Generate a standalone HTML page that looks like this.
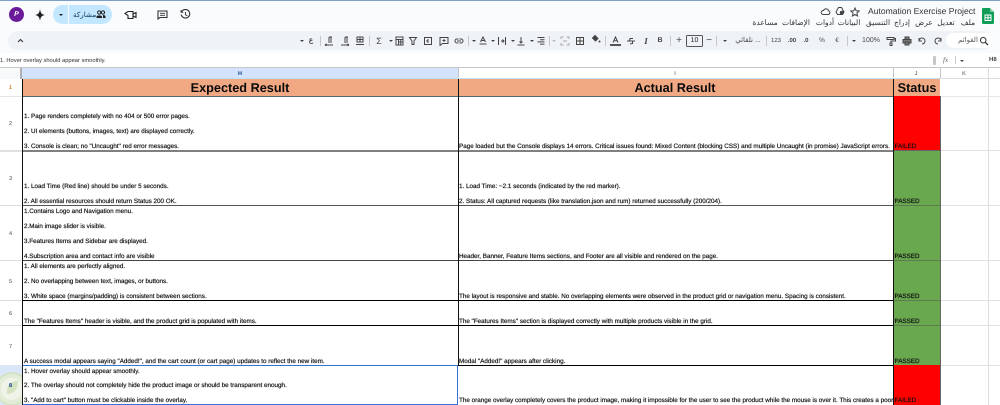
<!DOCTYPE html>
<html><head><meta charset="utf-8">
<style>
html,body{margin:0;padding:0;width:1000px;height:405px;overflow:hidden;background:#fff}
body{position:relative;font-family:"Liberation Sans","Noto Sans CJK SC",sans-serif;color:#111;text-rendering:geometricPrecision}
div,span,svg{position:absolute}
.b{position:absolute}
.t{font-size:6.3px;line-height:8px;height:8px;white-space:nowrap;color:#111;-webkit-text-stroke:.18px #111;margin-top:.5px}
.h{left:24px}.i{left:459px;max-width:434px;overflow:hidden}.j{left:894.5px}
.hd{font-weight:bold;font-size:12.7px;line-height:16px;top:80px;color:#0a0a0a;white-space:nowrap;transform:translateX(-50%)}
.rn{font-size:5.5px;line-height:6px;color:#444;left:0;width:21px;text-align:center;margin-top:.5px}
.ch{font-size:5.5px;line-height:6px;color:#444;top:71px;transform:translateX(-50%)}
.m{font-size:7.5px;line-height:10px;top:18px;color:#333;white-space:nowrap;transform:translateX(-50%)}
.tb{font-size:7px;line-height:10px;top:36px;color:#444;white-space:nowrap;transform:translateX(-50%)}
.dd{width:0;height:0;border-left:2px solid transparent;border-right:2px solid transparent;border-top:2px solid #444;top:40px}
.sp{width:1px;height:10px;top:36px;background:#c7c7c7}
.ic{top:36px;width:10px;height:10px;fill:none;stroke:#444;stroke-width:1}
</style></head><body>
<!-- top chrome -->
<div class="b" style="left:0;top:0;width:1000px;height:68px;background:#f9fbfd"></div>
<div class="b" style="left:0;top:0;width:1000px;height:1px;background:#7d9fc9"></div>
<div class="b" style="left:8px;top:31px;width:985px;height:19px;border-radius:10px;background:#eff3f8"></div>
<div class="b" style="left:0;top:53px;width:1000px;height:15px;background:#fff"></div>

<!-- left top icons -->
<div class="b" style="left:9px;top:7px;width:15px;height:15px;border-radius:50%;background:#6a1b9a;color:#fff;font-size:7px;font-weight:bold;font-style:italic;line-height:15px;text-align:center">P</div>
<svg style="left:34px;top:8px" width="12" height="14" viewBox="0 0 12 14"><path d="M6 1C6.6 5 7.5 6.3 11 7C7.5 7.7 6.6 9 6 13C5.4 9 4.5 7.7 1 7C4.500 6.300 5.400 5 6 1Z" fill="#1f1f1f"/></svg>
<div class="b" style="left:53px;top:5px;width:59px;height:19px;border-radius:10px;background:#c2e7ff"></div>
<div class="b" style="left:68px;top:5px;width:1px;height:19px;background:#f9fbfd"></div>
<div class="dd" style="left:59px;top:14px;border-top-color:#1f1f1f"></div>
<span style="left:73px;top:9.500px;font-size:7.2px;line-height:10px;color:#0b3a5c;white-space:nowrap">مشاركة</span>
<svg style="left:96px;top:10px" width="10" height="9" viewBox="0 0 10 9"><circle cx="3.200" cy="2.500" r="1.600" fill="none" stroke="#1f1f1f"/><circle cx="7" cy="2.500" r="1.600" fill="none" stroke="#1f1f1f"/><path d="M.5 8V6.500C1 5 5.500 5 6 6.500V8ZM7 5C8.500 5 9.500 5.500 9.500 6.500V8H7" fill="#1f1f1f"/></svg>
<svg style="left:124px;top:10px" width="13" height="10" viewBox="0 0 13 10" fill="none" stroke="#1f1f1f" stroke-width="1.100"><path d="M4 1.500H9V8.500H4V5.500L1 3.500L4 1.500Z"/><path d="M9 4L12 2.500V7.500L9 6"/></svg>
<svg style="left:157px;top:10px" width="11" height="10" viewBox="0 0 11 10" fill="none" stroke="#333" stroke-width="1.100"><path d="M1 1H10V7.500H3L1 9V1Z"/><path d="M3 3.300H8M3 5.300H8" stroke-width=".8"/></svg>
<svg style="left:180px;top:9px" width="11" height="11" viewBox="0 0 11 11" fill="none" stroke="#333" stroke-width="1.100"><path d="M1.500 3A4.300 4.300 0 1 1 1.200 5.500"/><path d="M1 1V3.300H3.300M5.500 3V5.700L7.300 6.800" stroke-width=".9"/></svg>

<!-- title area -->
<svg style="left:820px;top:7px" width="11" height="9" viewBox="0 0 11 9" fill="none" stroke="#444"><path d="M3 7.500H8.500A2 2 0 0 0 8.500 3.700C8 1.500 4.500 1 3.500 3.500A2 2 0 0 0 3 7.500Z"/></svg>
<svg style="left:835px;top:6px" width="10" height="10" viewBox="0 0 10 10" fill="none" stroke="#444"><path d="M3.500 1.500H6.500L9 6L7.500 8.500H2.500L1 6Z"/><circle cx="6.800" cy="6.800" r="1.500" fill="#444"/></svg>
<svg style="left:850px;top:7px" width="10" height="10" viewBox="0 0 10 10" fill="none" stroke="#444"><path d="M5 1L6.200 3.800L9.200 4L6.900 6L7.600 9L5 7.400L2.400 9L3.100 6L.8 4L3.800 3.800Z"/></svg>
<span style="left:868px;top:6px;font-size:8.55px;line-height:11px;color:#333;white-space:nowrap">Automation Exercise Project</span>
<svg style="left:982px;top:8px" width="12" height="16" viewBox="0 0 12 16"><path d="M1.200 0H8L12 4V14.800A1.200 1.200 0 0 1 10.800 16H1.200A1.200 1.200 0 0 1 0 14.800V1.200A1.200 1.200 0 0 1 1.200 0Z" fill="#0f9d58"/><path d="M8 0L12 4H8Z" fill="#7cc79c"/><path d="M3 7H9V12.500H3ZM3 9.700H9M6 7V12.500" fill="none" stroke="#fff"/></svg>
<span class="m" style="left:968px">ملف</span><span class="m" style="left:946px">تعديل</span><span class="m" style="left:924px">عرض</span><span class="m" style="left:902px">إدراج</span><span class="m" style="left:878px">التنسيق</span><span class="m" style="left:849px">البيانات</span><span class="m" style="left:825px">أدوات</span><span class="m" style="left:796px">الإضافات</span><span class="m" style="left:765px">مساعدة</span>

<!-- toolbar -->
<svg style="left:17px;top:38px" width="7" height="5" viewBox="0 0 7 5" fill="none" stroke="#333" stroke-width="1.100"><path d="M1 4L3.500 1.500L6 4"/></svg>
<div class="dd" style="left:300px"></div><span class="tb" style="left:311px;font-weight:bold">ع</span><div class="sp" style="left:320px"></div>
<svg class="ic" style="left:324px" viewBox="0 0 10 10"><path d="M5 1H8M5 1V7M7 1V7M1 9H9M1 9L2.500 7.800M1 9L2.500 10"/></svg>
<svg class="ic" style="left:340px" viewBox="0 0 10 10"><path d="M5 1H8M5 1V7M7 1V7M1 9H9M9 9L7.500 7.800M9 9L7.500 10"/></svg>
<svg class="ic" style="left:355px" viewBox="0 0 10 10"><path d="M2 1H8V6H2ZM2 3.500H8M5 1V6M1 8.500H9"/></svg>
<div class="sp" style="left:369px"></div>
<span class="tb" style="left:379px;font-size:9px">Σ</span><div class="dd" style="left:389px"></div>
<svg class="ic" style="left:394px" viewBox="0 0 10 10"><path d="M2 1H9V9H2ZM2 3.500H9M4.500 3.500V9M6.800 3.500V9M4.500 6H9"/></svg>
<svg class="ic" style="left:408px" viewBox="0 0 10 10"><path d="M1.500 1.500H8.500L6 5V8.500H4V5Z"/></svg>
<svg class="ic" style="left:423px" viewBox="0 0 10 10"><path d="M1.500 1.500H8.500V8.500H1.500ZM5 3V7M3 5H5"/></svg>
<svg class="ic" style="left:439px" viewBox="0 0 10 10"><path d="M1 1.500H9V7.500H3.500L1 9.500ZM5 3V6M3.500 4.500H6.500"/></svg>
<svg class="ic" style="left:454px" viewBox="0 0 10 10"><path d="M4.500 3H3A2 2 0 0 0 3 7H4.500M5.500 3H7A2 2 0 0 1 7 7H5.500M3 5H7"/></svg>
<div class="sp" style="left:468px"></div>
<div class="dd" style="left:472px"></div>
<svg class="ic" style="left:478px" viewBox="0 0 10 10"><path d="M2.500 6L5 1L7.500 6M3.500 4.500H6.500M1.500 8H8.500"/></svg>
<div class="dd" style="left:491px"></div>
<svg class="ic" style="left:497px" viewBox="0 0 10 10"><path d="M1.500 1V9M8.500 1V9M4 5H7M5.500 3.500L7 5L5.500 6.500"/></svg>
<div class="dd" style="left:511px"></div>
<svg class="ic" style="left:516px" viewBox="0 0 10 10"><path d="M5 1V7M3.500 5.500L5 7L6.500 5.500M1.500 9H8.500"/></svg>
<div class="dd" style="left:530px"></div>
<svg class="ic" style="left:536px" viewBox="0 0 10 10"><path d="M1.500 1.500H8.500M4 3.700H8.500M1.500 5.900H8.500M4 8.100H8.500"/></svg>
<div class="sp" style="left:549px"></div>
<div class="dd" style="left:552px;border-top-color:#bbb"></div>
<svg class="ic" style="left:560px;stroke:#aaa" viewBox="0 0 10 10"><path d="M1 3V1H3.500M6.500 1H9V3M1 7V9H3.500M6.500 9H9V7M3 5H7"/></svg>
<svg class="ic" style="left:575px" viewBox="0 0 10 10"><path d="M1.500 1.500H8.500V8.500H1.500ZM5 1.500V8.500M1.500 5H8.500"/></svg>
<svg class="ic" style="left:591px;top:34px" viewBox="0 0 10 10"><path d="M3.500 1L7 4.500L4.500 7L1.500 4L3.500 2" fill="#444"/><circle cx="8.500" cy="7.500" r="1" fill="#444" stroke="none"/></svg>
<div class="sp" style="left:605px"></div>
<svg class="ic" style="left:610px;width:11px" viewBox="0 0 11 10"><path d="M3 6.500L5.500 1L8 6.500M4 4.800H7"/><path d="M0 9H11" stroke="#111" stroke-width="1.400"/></svg>
<svg class="ic" style="left:626px" viewBox="0 0 10 10"><path d="M1 5H9M7 2.500H4L3.500 5M6.500 5V7.500L4 8"/></svg>
<span class="tb" style="left:646px;font-style:italic;font-family:'Liberation Serif',serif;font-size:9px;font-weight:bold">I</span>
<span class="tb" style="left:660px;font-weight:bold">B</span>
<div class="sp" style="left:670px"></div>
<span class="tb" style="left:679px;font-size:10px">+</span>
<div class="b" style="left:686px;top:35px;width:15px;height:10px;border:1px solid #555;border-radius:1.500px;font-size:7px;line-height:10px;text-align:center;color:#222">10</div>
<span class="tb" style="left:709px;font-size:10px">−</span>
<div class="sp" style="left:716px"></div>
<div class="dd" style="left:723px"></div>
<span class="tb" style="left:748px">تلقائي ...</span>
<div class="sp" style="left:766px"></div>
<span class="tb" style="left:776px;font-size:6px">123</span>
<span class="tb" style="left:792px;font-size:6px;font-weight:bold">.00</span>
<span class="tb" style="left:806px;font-size:6px;font-weight:bold">.0</span>
<span class="tb" style="left:822px;font-size:6.500px">%</span>
<span class="tb" style="left:837px;font-size:6.500px">€</span>
<div class="sp" style="left:847px"></div>
<div class="dd" style="left:852px"></div>
<span class="tb" style="left:871px">100%</span>
<svg class="ic" style="left:886px" viewBox="0 0 10 10"><path d="M1 1.500H8V3.500H1ZM8 2.500H9.500V5H5V7M4 7H6V9.500H4Z"/></svg>
<svg class="ic" style="left:902px" viewBox="0 0 10 10"><path d="M3 3V1H7V3M3 7H1V3.500H9V7H7M3 6H7V9H3Z" fill="#777"/></svg>
<svg class="ic" style="left:917px" viewBox="0 0 10 10"><path d="M2 2V5H5M2 5A3 3 0 1 1 5 8"/></svg>
<svg class="ic" style="left:933px" viewBox="0 0 10 10"><path d="M8 2V5H5M8 5A3 3 0 1 0 5 8"/></svg>
<div class="b" style="left:946px;top:33px;width:47px;height:15px;border-radius:8px;background:#fff"></div>
<span class="tb" style="left:968px;color:#555">القوائم</span>
<svg class="ic" style="left:979px;stroke:#333" viewBox="0 0 10 10"><circle cx="4.200" cy="4.200" r="2.800"/><path d="M6.300 6.300L9 9" stroke-width="1.300"/></svg>

<!-- formula bar -->
<span style="left:0;top:56.500px;font-size:5.75px;line-height:8px;color:#333;white-space:nowrap">1. Hover overlay should appear smoothly.</span>
<div class="b" style="left:933px;top:56px;width:3px;height:9px;background:#c7c7c7;border-radius:1px"></div>
<span style="left:943px;top:56px;font-size:7px;line-height:9px;font-style:italic;font-family:'Liberation Serif',serif;color:#666">fx</span>
<div class="b" style="left:955px;top:56px;width:1px;height:8px;background:#ccc"></div>
<div class="dd" style="left:960px;top:60px"></div>
<span style="left:989px;top:56px;font-size:6px;line-height:8px;font-weight:bold;color:#444">H8</span>

<!-- column headers -->
<div class="b" style="left:0;top:67px;width:1000px;height:1px;background:#c4c7c5"></div>
<div class="b" style="left:0;top:68px;width:21px;height:11px;background:#f8f9fa"></div>
<div class="b" style="left:20px;top:68px;width:2px;height:11px;background:#b0b0b0"></div>
<div class="b" style="left:22px;top:68px;width:436px;height:11px;background:#d3e3fd"></div>
<div class="b" style="left:457.500px;top:68px;width:1px;height:11px;background:#c4c7c5"></div>
<div class="b" style="left:893px;top:68px;width:1px;height:11px;background:#c4c7c5"></div>
<div class="b" style="left:940px;top:68px;width:1px;height:11px;background:#c4c7c5"></div>
<div class="b" style="left:988px;top:68px;width:1px;height:337px;background:#ddd"></div>
<div class="b" style="left:940px;top:78px;width:60px;height:1px;background:#ddd"></div>
<span class="ch" style="left:240px;font-weight:bold;color:#0b3a8c">H</span><span class="ch" style="left:675px">I</span><span class="ch" style="left:916px">J</span><span class="ch" style="left:964px">K</span>

<!-- row 1 -->
<div class="b" style="left:22px;top:79px;width:918px;height:17px;background:#f1a983"></div>
<div class="b" style="left:22px;top:78px;width:918px;height:1px;background:#bfe3f2"></div>
<div class="b" style="left:22px;top:95.500px;width:918px;height:1.200px;background:#4f6b70"></div>
<span class="hd" style="left:240px">Expected Result</span>
<span class="hd" style="left:675px">Actual Result</span>
<span class="hd" style="left:917px">Status</span>

<!-- row headers gridlines -->
<div class="b" style="left:0;top:96px;width:22px;height:1px;background:#e4e4e4"></div>
<div class="b" style="left:0;top:150px;width:22px;height:1.500px;background:#e0e0e0"></div>
<div class="b" style="left:0;top:205px;width:22px;height:1px;background:#ddd"></div>
<div class="b" style="left:0;top:260px;width:22px;height:1px;background:#ddd"></div>
<div class="b" style="left:0;top:300px;width:22px;height:1px;background:#ddd"></div>
<div class="b" style="left:0;top:325px;width:22px;height:1px;background:#ddd"></div>
<div class="b" style="left:0;top:365px;width:22px;height:40px;background:#d9e6f8"></div>
<svg style="left:0;top:365px" width="22" height="40" viewBox="0 0 22 40"><circle cx="12" cy="24" r="16" fill="#e2ecd6" stroke="#d4e2c6" stroke-width="2"/><circle cx="12" cy="24" r="11" fill="#f0f4e8"/><path d="M7 29C6 20 11 16 18 16C18 24 14 29 7 29Z" fill="#d5e3c0"/></svg>
<div class="b" style="left:940px;top:96px;width:60px;height:1px;background:#e8e8e8"></div>
<div class="b" style="left:941px;top:150px;width:59px;height:1px;background:#e0e0e0"></div>
<div class="b" style="left:941px;top:205px;width:59px;height:1px;background:#e0e0e0"></div>
<div class="b" style="left:941px;top:260px;width:59px;height:1px;background:#e0e0e0"></div>
<div class="b" style="left:941px;top:300px;width:59px;height:1px;background:#e0e0e0"></div>
<div class="b" style="left:941px;top:325px;width:59px;height:1px;background:#e0e0e0"></div>
<div class="b" style="left:941px;top:365px;width:59px;height:1px;background:#e0e0e0"></div>
<span class="rn" style="top:84px;color:#c77a20;font-weight:bold">1</span>
<span class="rn" style="top:120px">2</span><span class="rn" style="top:175px">3</span><span class="rn" style="top:230px">4</span><span class="rn" style="top:278px">5</span><span class="rn" style="top:310px">6</span><span class="rn" style="top:343px">7</span><span class="rn" style="top:382px;font-weight:bold;color:#0b3a8c">8</span>

<!-- status fills -->
<div class="b" style="left:893px;top:96px;width:47px;height:55px;background:#ff0000"></div>
<div class="b" style="left:893px;top:151px;width:47px;height:214px;background:#6aa84f"></div>
<div class="b" style="left:893px;top:365px;width:47px;height:40px;background:#ff0000"></div>

<!-- grid lines -->
<div class="b" style="left:22px;top:150px;width:871px;height:1.500px;background:#808080"></div>
<div class="b" style="left:22px;top:205px;width:871px;height:1px;background:#555"></div>
<div class="b" style="left:22px;top:260px;width:871px;height:1px;background:#444"></div>
<div class="b" style="left:22px;top:300px;width:871px;height:1px;background:#000"></div>
<div class="b" style="left:22px;top:325px;width:871px;height:1px;background:#000"></div>
<div class="b" style="left:22px;top:365px;width:871px;height:1px;background:#000"></div>
<div class="b" style="left:893px;top:150px;width:47px;height:1px;background:#666"></div>
<div class="b" style="left:893px;top:205px;width:47px;height:1px;background:#5d7d50"></div>
<div class="b" style="left:893px;top:260px;width:47px;height:1px;background:#5d7d50"></div>
<div class="b" style="left:893px;top:300px;width:47px;height:1px;background:#5d7d50"></div>
<div class="b" style="left:893px;top:325px;width:47px;height:1px;background:#5d7d50"></div>
<div class="b" style="left:22px;top:79px;width:1px;height:326px;background:#111"></div>
<div class="b" style="left:457.500px;top:79px;width:1px;height:286px;background:#111"></div>
<div class="b" style="left:892.500px;top:79px;width:1px;height:326px;background:#111"></div>
<div class="b" style="left:939.500px;top:96px;width:1px;height:309px;background:#666"></div>
<!-- selection -->
<div class="b" style="left:22px;top:365px;width:1px;height:40px;background:#1a1a1a"></div>
<div class="b" style="left:457px;top:365px;width:1.300px;height:39px;background:#3a6fd8"></div>
<div class="b" style="left:23px;top:403.500px;width:435px;height:1.200px;background:#3a6fd8"></div>
<div class="b" style="left:23px;top:365px;width:435px;height:1px;background:#3a6fd8"></div>

<!-- H texts -->
<span class="t h" style="top:112px">1. Page renders completely with no 404 or 500 error pages.</span>
<span class="t h" style="top:127px">2. UI elements (buttons, images, text) are displayed correctly.</span>
<span class="t h" style="top:142px">3. Console is clean; no "Uncaught" red error messages.</span>
<span class="t h" style="top:182px">1. Load Time (Red line) should be under 5 seconds.</span>
<span class="t h" style="top:197px">2. All essential resources should return Status 200 OK.</span>
<span class="t h" style="top:207px">1.Contains Logo and Navigation menu.</span>
<span class="t h" style="top:222px">2.Main image slider is visible.</span>
<span class="t h" style="top:237px">3.Features Items and Sidebar are displayed.</span>
<span class="t h" style="top:252px">4.Subscription area and contact info are visible</span>
<span class="t h" style="top:262px">1. All elements are perfectly aligned.</span>
<span class="t h" style="top:277px">2. No overlapping between text, images, or buttons.</span>
<span class="t h" style="top:292px">3. White space (margins/padding) is consistent between sections.</span>
<span class="t h" style="top:317px">The "Features Items" header is visible, and the product grid is populated with items.</span>
<span class="t h" style="top:357px">A success modal appears saying "Added!", and the cart count (or cart page) updates to reflect the new item.</span>
<span class="t h" style="top:367px">1. Hover overlay should appear smoothly.</span>
<span class="t h" style="top:381px">2. The overlay should not completely hide the product image or should be transparent enough.</span>
<span class="t h" style="top:396px">3. "Add to cart" button must be clickable inside the overlay.</span>

<!-- I texts -->
<span class="t i" style="top:142px">Page loaded but the Console displays 14 errors. Critical issues found: Mixed Content (blocking CSS) and multiple Uncaught (in promise) JavaScript errors.</span>
<span class="t i" style="top:182px">1. Load Time: ~2.1 seconds (indicated by the red marker).</span>
<span class="t i" style="top:197px">2. Status: All captured requests (like translation.json and rum) returned successfully (200/204).</span>
<span class="t i" style="top:252px">Header, Banner, Feature Items sections, and Footer are all visible and rendered on the page.</span>
<span class="t i" style="top:292px">The layout is responsive and stable. No overlapping elements were observed in the product grid or navigation menu. Spacing is consistent.</span>
<span class="t i" style="top:317px">The "Features Items" section is displayed correctly with multiple products visible in the grid.</span>
<span class="t i" style="top:357px">Modal "Added!" appears after clicking.</span>
<span class="t i" style="top:396px">The orange overlay completely covers the product image, making it impossible for the user to see the product while the mouse is over it. This creates a poor user experience.</span>

<!-- J texts -->
<span class="t j" style="top:142px">FAILED</span>
<span class="t j" style="top:197px">PASSED</span>
<span class="t j" style="top:252px">PASSED</span>
<span class="t j" style="top:292px">PASSED</span>
<span class="t j" style="top:317px">PASSED</span>
<span class="t j" style="top:357px">PASSED</span>
<span class="t j" style="top:396px">FAILED</span>
</body></html>
